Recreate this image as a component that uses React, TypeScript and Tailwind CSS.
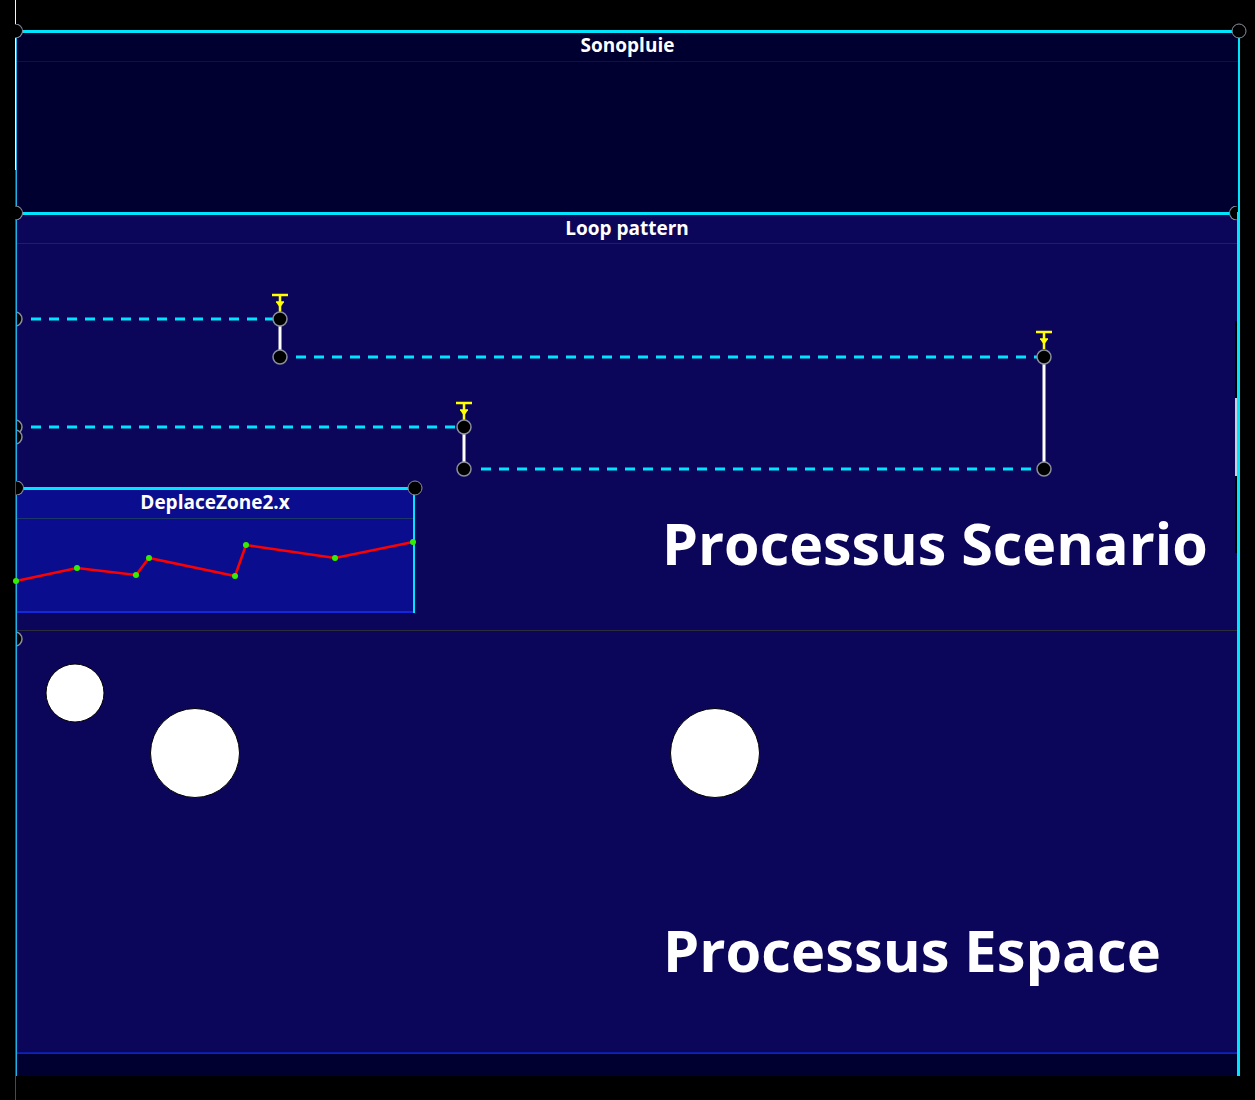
import React from "react";

type Pt = [number, number];

// poignée pleine (cercle noir, contour gris)
const Handle = ({ className }: { className: string }) => (
  <div
    className={`absolute h-[15px] w-[15px] -translate-x-1/2 -translate-y-1/2 rounded-full border-[1.5px] border-[#8a8f9c] bg-black ${className}`}
  />
);

// demi-poignée coupée par le bord gauche
const HalfHandleRight = ({ className }: { className: string }) => (
  <div
    className={`absolute h-[15px] w-[8px] -translate-y-1/2 rounded-r-full border-[1.5px] border-l-0 border-[#8a8f9c] bg-black ${className}`}
  />
);

// demi-poignée coupée par le bord droit
const HalfHandleLeft = ({ className }: { className: string }) => (
  <div
    className={`absolute h-[15px] w-[8px] -translate-x-full -translate-y-1/2 rounded-l-full border-[1.5px] border-r-0 border-[#8a8f9c] bg-black ${className}`}
  />
);

const Node = ({ x, y }: { x: number; y: number }) => (
  <circle cx={x} cy={y} r={7} fill="#000" stroke="#8a8f9c" strokeWidth={1.5} />
);

const Trigger = ({ x, y }: { x: number; y: number }) => (
  <g>
    <line x1={x - 8} x2={x + 8} y1={y} y2={y} stroke="#ffff00" strokeWidth={2.5} />
    <line x1={x} x2={x} y1={y} y2={y + 17} stroke="#ffff00" strokeWidth={2.5} />
    <line x1={x - 4} x2={x + 4} y1={y + 7} y2={y + 7} stroke="#ffff00" strokeWidth={1.5} />
    <path d={`M${x - 4} ${y + 7} L${x + 4} ${y + 7} L${x} ${y + 13} Z`} fill="#ffff00" />
  </g>
);

const Dashed = ({ x1, x2, y }: { x1: number; x2: number; y: number }) => (
  <line x1={x1} x2={x2} y1={y} y2={y} stroke="#00e5ff" strokeWidth={3} strokeDasharray="10 8" />
);

const Stem = ({ x, y1, y2 }: { x: number; y1: number; y2: number }) => (
  <line x1={x} x2={x} y1={y1} y2={y2} stroke="#ffffff" strokeWidth={3} />
);

/**
 * Ligne temporelle du scénario (intervalles, conditions, déclencheurs)
 */
const Timeline = () => (
  <svg width={1220} height={243} className="block">
    <Dashed x1={14} x2={263} y={75} />
    <Dashed x1={279} x2={1027} y={113} />
    <Dashed x1={14} x2={447} y={183} />
    <Dashed x1={464} x2={1027} y={225} />

    <Stem x={263} y1={75} y2={113} />
    <Stem x={1027} y1={113} y2={225} />
    <Stem x={447} y1={183} y2={225} />

    <Trigger x={263} y={51} />
    <Trigger x={1027} y={88} />
    <Trigger x={447} y={159} />

    <Node x={263} y={75} />
    <Node x={263} y={113} />
    <Node x={1027} y={113} />
    <Node x={1027} y={225} />
    <Node x={447} y={183} />
    <Node x={447} y={225} />

    <Node x={-2} y={75} />
    <Node x={-2} y={183} />
    <Node x={-2} y={193} />
  </svg>
);

const curve: Pt[] = [
  [-1, 62],
  [60, 49],
  [119, 56],
  [132, 39],
  [218, 57],
  [229, 26],
  [318, 39],
  [396, 23],
];

/**
 * Boîte d'automation DeplaceZone2.x
 */
const AutomationBox = () => (
  <div className="relative w-[398px] shrink-0 border-r-2 border-r-[#00e5ff] bg-[#0a0e8e]">
    <div className="h-[3px] bg-[#00e5ff]" />
    <div className="flex h-[29px] items-center justify-center border-b border-[#1d3868] pb-[3px] text-[19px] font-bold text-white">
      DeplaceZone2.x
    </div>
    <svg width={396} height={92} className="block overflow-visible">
      <polyline
        points={curve.map(([x, y]) => `${x},${y}`).join(" ")}
        fill="none"
        stroke="#ff0000"
        strokeWidth={2.5}
      />
      {curve.map(([x, y], i) => (
        <circle key={i} cx={x} cy={y} r={3} fill="#33ee00" />
      ))}
    </svg>
    <div className="h-[2px] bg-[#1428d8]" />

    <HalfHandleRight className="left-[-1px] top-[1px]" />
    <Handle className="left-[397.5px] top-[1px]" />
  </div>
);

export default function App() {
  return (
    <div className="flex h-[1100px] w-[1255px] overflow-hidden bg-black font-['Open_Sans',sans-serif]">
      <div className="w-[15px] shrink-0" />
      {/* ligne verticale gauche */}
      <div className="w-px shrink-0 bg-[linear-gradient(to_bottom,#eef6ff_0,#eef6ff_170px,#1a4fb0_170px,#1a4fb0_100%)]" />

      <div className="flex w-[1224px] shrink-0 flex-col">
        <div className="h-[30px]" />

        {/* Sonopluie */}
        <section className="relative border-l border-r-2 border-l-[#1fb0e8] border-r-[#00e5ff] bg-[#000030]">
          <div className="h-[3px] bg-[#00e5ff]" />
          <div className="flex h-[29px] items-center justify-center border-b border-[#0b0b6b] pb-[3px] text-[19px] font-bold text-white">
            Sonopluie
          </div>
          <div className="h-[150px]" />

          <HalfHandleRight className="left-[-2px] top-[1px]" />
          <Handle className="left-[1221.5px] top-[1px]" />
        </section>

        {/* Loop pattern */}
        <section className="relative border-l border-r-[3px] border-l-[#1fb0e8] border-r-[#00e5ff] bg-[#0c065a]">
          <div className="h-[3px] bg-[#00e5ff]" />
          <div className="flex h-[29px] items-center justify-center border-b border-[#1a1a90] pb-[2px] text-[19px] font-bold text-white">
            Loop pattern
          </div>

          {/* Processus Scenario */}
          <div className="flex h-[387px] flex-col border-b border-[#2c2c3c]">
            <Timeline />
            <div className="flex items-start">
              <AutomationBox />
              <div className="ml-[247px] mt-[28px] whitespace-nowrap text-[57.4px] font-bold leading-none text-white">
                Processus Scenario
              </div>
            </div>
          </div>

          {/* Processus Espace */}
          <div className="relative h-[421px]">
            <svg width={1220} height={421} className="absolute inset-0">
              <circle cx={58} cy={62} r={29} fill="#fff" stroke="#000" strokeWidth={1} />
              <circle cx={178} cy={122} r={44.5} fill="#fff" stroke="#000" strokeWidth={1} />
              <circle cx={698} cy={122} r={44.5} fill="#fff" stroke="#000" strokeWidth={1} />
              <Node x={-2} y={8} />
            </svg>
            <div className="relative pl-[646px] pt-[290px] whitespace-nowrap text-[57.8px] font-bold leading-none text-white">
              Processus Espace
            </div>
          </div>

          <div className="h-px bg-[#0c1aa8]" />
          <div className="h-px bg-[#2c2c3c]" />
          <div className="h-[22px] bg-[#000030]" />

          <HalfHandleRight className="left-[-2px] top-[1px]" />
          <HalfHandleLeft className="left-[1220px] top-[1px]" />

          {/* barre de défilement */}
          <div className="absolute left-[1218px] top-[109px] h-[232px] w-[2px] bg-black">
            <div className="mt-[77px] h-[78px] w-[2px] bg-[#c8d0e0]" />
          </div>
        </section>
      </div>
    </div>
  );
}
